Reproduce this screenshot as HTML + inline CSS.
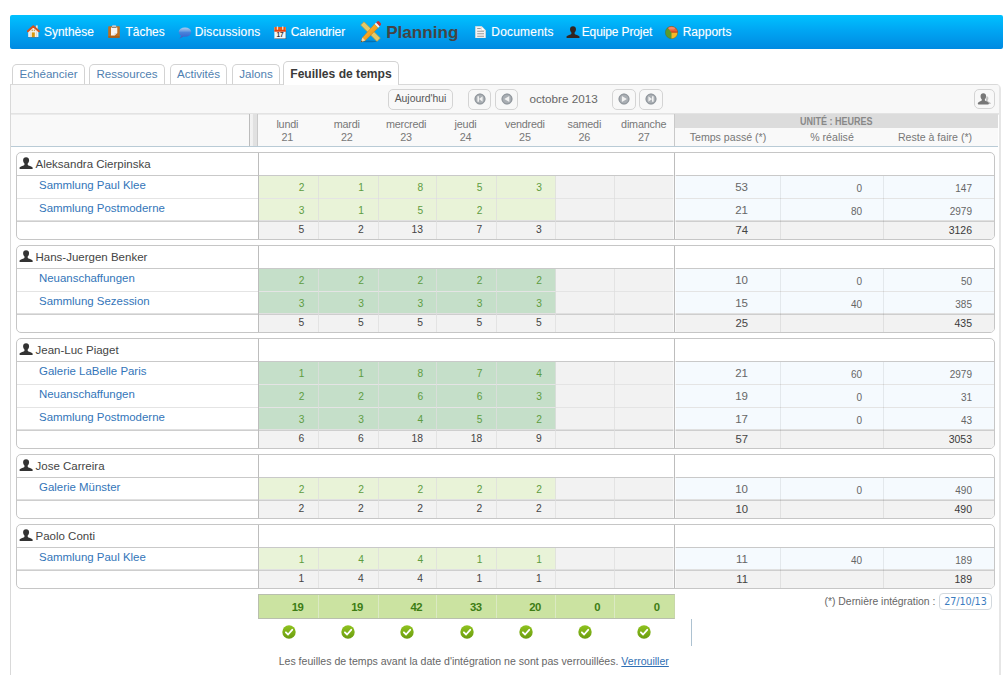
<!DOCTYPE html><html lang="fr"><head><meta charset="utf-8"><title>Planning - Feuilles de temps</title><style>
*{box-sizing:border-box}
html,body{margin:0;padding:0}
body{width:1006px;height:680px;overflow:hidden;background:#fff;position:relative;font-family:"Liberation Sans",sans-serif;font-size:12px;color:#333}
.a{position:absolute}
.t{position:absolute;white-space:nowrap;line-height:1}
#nav{left:10px;top:15px;width:993px;height:34px;border-radius:2px;background:linear-gradient(#00c1ff 0%,#00a6f3 45%,#008ae1 100%)}
#nav .t{color:#fff;font-size:12px;top:11px;text-shadow:0 0 1px rgba(255,255,255,.35)}
#nav .cur{color:#444;font-weight:bold;font-size:17.1px;top:9px;text-shadow:none}
.tab{position:absolute;top:64px;height:20px;border:1px solid #d3d3d3;border-bottom:none;border-radius:5px 5px 0 0;background:#fff;color:#4f7fb0;font-size:11.6px;text-align:center;line-height:18px;white-space:nowrap}
.tab.on{background:#fff;color:#333;font-weight:bold;top:61px;height:24px;line-height:24px;border-color:#d3d3d3;font-size:12.1px;color:#3a3a3a}
#panel{left:10px;top:84px;width:991px;height:591px;border:1px solid #d9d9d9;border-right:2px solid #e6e6e6;border-bottom:none;border-radius:0 5px 0 0;background:#fff}
#tb{left:11px;top:85px;width:988px;border-radius:0 3px 0 0;height:30px;background:#f8f8f8;border-bottom:1px solid #ebebeb;box-shadow:inset 0 -1px 0 #e3e3e3}
#hd{left:11px;top:115px;width:987px;height:32px;background:#f9f9f9;border-bottom:1px solid #b9cbd6}
.btn{position:absolute;top:89px;height:21px;border:1px solid #d4d4d4;border-radius:5px;background:#f8f8f8;color:#555;font-size:10.4px;text-align:center;line-height:18px}
.dh{position:absolute;top:117.6px;width:60px;text-align:center;color:#777;font-size:10.8px;letter-spacing:-.2px;line-height:13.8px;white-space:nowrap}
.rh{position:absolute;top:131px;text-align:center;color:#777;font-size:10.6px;line-height:13px;white-space:nowrap}
.g{position:absolute;border:1px solid #c6c6c6;border-radius:5px;background:#fff;overflow:hidden}
.c{position:absolute}
.n{position:absolute;white-space:nowrap;text-align:right;font-size:10.2px;line-height:1}
.lk{position:absolute;white-space:nowrap;color:#3375b9;font-size:11.45px;line-height:1;left:22px}
.nm{position:absolute;white-space:nowrap;color:#444;font-size:11.5px;line-height:1;left:18.5px}
.uic{position:absolute;left:2.4px}
.vl{position:absolute;width:1px;background:#bdbdbd;top:0;bottom:0}
.hl{position:absolute;height:1px;left:0;right:0}
</style></head><body>
<div id="nav" class="a">
<svg class="a" style="left:17.3px;top:9.5px" width="13" height="13" viewBox="0 0 13 13"><rect x="8.9" y="0.4" width="1.8" height="3.4" fill="#f1e4df"/><path d="M1.2 6.2L6.3 1.8l5.1 4.400V12.300H1.200z" fill="#f3f1ee"/><path d="M3.300 6.500v5.800M9.500 6.500v5.800" stroke="#dcd8d2" stroke-width=".8"/><rect x="4.800" y="7.400" width="3" height="4.900" fill="#d9980f"/><rect x="4.600" y="4.600" width="1.300" height="1.500" fill="#c9a055"/><rect x="6.800" y="4.600" width="1.300" height="1.500" fill="#c9a055"/><path d="M0.800 6.300L6.300 1.200l5.600 5.100" fill="none" stroke="#d6521c" stroke-width="1.900" stroke-linejoin="round" stroke-linecap="round"/><rect x="1" y="12.100" width="10.600" height=".7" fill="#2b5f86" opacity=".7"/></svg>
<span class="t" style="left:33.9px">Synthèse</span>
<svg class="a" style="left:98px;top:10px" width="12" height="13" viewBox="0 0 12 13"><rect x="0.200" y="1.200" width="11.600" height="11.500" rx="0.800" fill="#c0701f"/><rect x="0.200" y="11.300" width="11.600" height="1.400" rx="0.700" fill="#a85c14"/><path d="M3 2.600h6.300v5.300L6.500 10.600H3z" fill="#f6f4f2"/><path d="M9.300 7.900L6.500 10.600V8.300z" fill="#d8d2cc"/><rect x="4" y="0.300" width="4.200" height="2.100" rx="0.900" fill="#c9c9c9"/><rect x="4" y="2.100" width="4.200" height=".8" fill="#777"/></svg>
<span class="t" style="left:115.4px">Tâches</span>
<svg class="a" style="left:167.5px;top:11.5px" width="14" height="12.500" viewBox="0 0 14 12.500"><defs><linearGradient id="bg1" x1="0" y1="0" x2="0" y2="1"><stop offset="0" stop-color="#b0cdee"/><stop offset=".4" stop-color="#6c9fe2"/><stop offset=".5" stop-color="#4a86dc"/><stop offset="1" stop-color="#3a66cf"/></linearGradient></defs><path d="M3.800 8.500L1.300 11.700l4.400-2.200z" fill="#4a5fc0"/><ellipse cx="7" cy="5.100" rx="6.300" ry="4.700" fill="url(#bg1)"/></svg>
<span class="t" style="left:184.7px;letter-spacing:0.15px">Discussions</span>
<svg class="a" style="left:264px;top:10.5px" width="12.500" height="13.500" viewBox="0 0 12.500 13.500"><rect x="0.400" y="1" width="11.400" height="12" rx="0.600" fill="#f6f6f6"/><rect x="0.400" y="12.300" width="11.700" height=".9" fill="#3c4c5c" opacity=".75"/><rect x="11.600" y="5" width=".7" height="8" fill="#3c4c5c" opacity=".6"/><rect x="0.400" y="1" width="11.400" height="4.400" fill="#ee5a12"/><rect x="0.400" y="4.500" width="11.400" height="1" fill="#d62a0a"/><rect x="2.800" y="0.200" width="1.300" height="3.600" rx=".6" fill="#e8e0dc"/><rect x="8.100" y="0.200" width="1.300" height="3.600" rx=".6" fill="#e8e0dc"/><text x="6.100" y="11.300" font-family="Liberation Sans,sans-serif" font-size="6.500" font-weight="bold" fill="#333" text-anchor="middle">17</text></svg>
<span class="t" style="left:280.7px;letter-spacing:-0.1px">Calendrier</span>
<svg class="a" style="left:349.5px;top:6px" width="21" height="21.500" viewBox="0 0 21 21.500"><defs><linearGradient id="pg1" x1="0" y1="0" x2="1" y2="1"><stop offset="0" stop-color="#ffc84a"/><stop offset=".5" stop-color="#f3a322"/><stop offset="1" stop-color="#d9860f"/></linearGradient></defs><path d="M0.700 4.100L4 0.800 20.300 17.100 17 20.400z" fill="#e3c968" stroke="#bf9c3a" stroke-width=".7"/><ellipse cx="9" cy="20.400" rx="8" ry=".8" fill="#0a3a66" opacity=".4"/><path d="M14.600 3.100l3.600 3.600L5.300 19.600l-4.400 1.500 1.600-4.500z" fill="url(#pg1)" stroke="#c47a14" stroke-width=".5"/><path d="M0.900 21.100l1.600-4.500 2.800 3z" fill="#f3d6ab"/><path d="M0.900 21.100l.6-1.600 1 1z" fill="#222"/><path d="M14.600 3.100l1.500-1.500 3.600 3.600-1.500 1.500z" fill="#f2f2f2"/><path d="M16.100 1.600l.9-.9a1.700 1.700 0 0 1 2.400 0l1.200 1.200a1.700 1.700 0 0 1 0 2.400l-.9.900z" fill="#cc3535"/></svg>
<span class="t cur" style="left:376.2px">Planning</span>
<svg class="a" style="left:465px;top:10.800px" width="11" height="12.500" viewBox="0 0 11 12.500"><path d="M0.300 0.300h6.200l4.200 4.200v7.700H0.300z" fill="#f3f3f3" stroke="#d5cfc9" stroke-width=".5"/><path d="M6.500 0.300v4.200h4.200z" fill="#fff" stroke="#c9c3bd" stroke-width=".4"/><path d="M2.200 2.500h3.500M2.200 5.200h6.800M2.200 7.800h6.800M2.200 10.300h6.800" stroke="#9a9a9a" stroke-width="1.100"/><rect x="0.300" y="12" width="10.700" height=".5" fill="#2c5c88" opacity=".5"/></svg>
<span class="t" style="left:481.3px;letter-spacing:0.2px">Documents</span>
<svg class="a" style="left:556.2px;top:11.2px" width="14" height="12.3" viewBox="0 0 14 12.400"><path d="M7 0.200c1.900 0 3 1.300 3 3.100 0 1.300-.6 2.600-1.400 3.300v.9c0 .5.400.8 1.600 1.200 1.900.6 3.200 1.200 3.500 2.400.1.500-.2.900-.7.900H1c-.5 0-.8-.4-.7-.9.300-1.200 1.600-1.800 3.500-2.400 1.200-.4 1.600-.7 1.600-1.200v-.9C4.600 5.900 4 4.600 4 3.300 4 1.500 5.100.2 7 .2z" fill="#33251f"/></svg>
<span class="t" style="left:571.7px;letter-spacing:-0.12px">Equipe Projet</span>
<svg class="a" style="left:655.200px;top:10.500px" width="13" height="13" viewBox="0 0 13 13"><circle cx="6.500" cy="6.500" r="6.200" fill="#5a9a2c"/><path d="M6.500 6.500L2.500 1.800A6.200 6.200 0 0 1 12.700 6.500z" fill="#e8623a"/><path d="M6.500 6.500h6.200A6.200 6.200 0 0 1 6.500 12.700z" fill="#f6b828"/><path d="M6.500 6.500h6.200v-.9H6z" fill="#cf3a18"/><ellipse cx="6.800" cy="2.300" rx="3.300" ry="1.200" fill="#fff" opacity=".25"/><circle cx="6.500" cy="6.500" r="6.200" fill="none" stroke="#5a4a2a" stroke-width=".5" opacity=".6"/></svg>
<span class="t" style="left:672.7px">Rapports</span>
</div>
<div id="panel" class="a"></div>
<div class="tab" style="left:12px;width:73px">Echéancier</div>
<div class="tab" style="left:89px;width:76px">Ressources</div>
<div class="tab" style="left:170px;width:57px">Activités</div>
<div class="tab" style="left:232px;width:48px">Jalons</div>
<div class="tab on" style="left:283px;width:116px">Feuilles de temps</div>
<div id="tb" class="a"></div><div id="hd" class="a"></div>
<div class="btn" style="left:388px;width:65px">Aujourd'hui</div>
<div class="btn" style="left:468px;width:23px"><svg class="a" style="left:4.9px;top:3.2px" width="12" height="12" viewBox="0 0 12 12"><circle cx="6" cy="6" r="5.500" fill="#a9aeb3"/><circle cx="6" cy="6" r="4.900" fill="none" stroke="#8f959b" stroke-width="1"/><path d="M3.4 3.2h1.6v5.600H3.400zM8.600 3.200v5.600L5 6z" fill="#f1f1f1"/></svg></div>
<div class="btn" style="left:495px;width:23px"><svg class="a" style="left:4.9px;top:3.2px" width="12" height="12" viewBox="0 0 12 12"><circle cx="6" cy="6" r="5.500" fill="#a9aeb3"/><circle cx="6" cy="6" r="4.900" fill="none" stroke="#8f959b" stroke-width="1"/><path d="M8.300 3v6L3.300 6z" fill="#f1f1f1"/></svg></div>
<div class="btn" style="left:612px;width:24px"><svg class="a" style="left:5.4px;top:3.2px" width="12" height="12" viewBox="0 0 12 12"><circle cx="6" cy="6" r="5.500" fill="#a9aeb3"/><circle cx="6" cy="6" r="4.900" fill="none" stroke="#8f959b" stroke-width="1"/><path d="M3.900 3v6l5-3z" fill="#f1f1f1"/></svg></div>
<div class="btn" style="left:639px;width:24px"><svg class="a" style="left:5.4px;top:3.2px" width="12" height="12" viewBox="0 0 12 12"><circle cx="6" cy="6" r="5.500" fill="#a9aeb3"/><circle cx="6" cy="6" r="4.900" fill="none" stroke="#8f959b" stroke-width="1"/><path d="M7 3.200h1.600v5.600H7zM3.400 3.200v5.600L7 6z" fill="#f1f1f1"/></svg></div>
<span class="t" style="left:529.5px;top:93px;color:#666;font-size:11.7px">octobre 2013</span>
<div class="btn" style="left:974px;width:21px;height:20px"><svg class="a" style="left:2.3px;top:3.3px" width="14.5" height="12" viewBox="0 0 14 13"><path d="M9.500 3.500c1.300 0 2 1 2 2.200 0 .9-.3 1.700-.8 2.200v.6c0 .4.300.6 1.100.9 1.200.4 2 .9 2.200 1.700v.9h-6z" fill="#c2c2c2"/><path d="M6 0.300c1.900 0 3 1.400 3 3.200 0 1.300-.5 2.600-1.300 3.300v1c0 .5.400.8 1.600 1.200 1.500.5 2.500 1.300 2.700 2.500.1.500-.2.900-.7.900H.700c-.5 0-.8-.4-.7-.9.200-1.200 1.200-2 2.700-2.500 1.200-.4 1.600-.7 1.600-1.200v-1C3.500 6.100 3 4.800 3 3.500 3 1.700 4.100.3 6 .3z" fill="#777"/></svg></div>
<div class="a" style="left:249px;top:114px;width:9px;height:32px;border-left:1px solid #bcbcbc;border-right:1px solid #cacaca;background:linear-gradient(90deg,#f3f3f3 0,#f0f0f0 2.5px,#e1e1e1 3.5px,#e1e1e1 100%)"></div>
<div class="dh" style="left:257.3px">lundi<br>21</div>
<div class="dh" style="left:316.7px">mardi<br>22</div>
<div class="dh" style="left:376.1px">mercredi<br>23</div>
<div class="dh" style="left:435.5px">jeudi<br>24</div>
<div class="dh" style="left:494.9px">vendredi<br>25</div>
<div class="dh" style="left:554.3px">samedi<br>26</div>
<div class="dh" style="left:613.7px">dimanche<br>27</div>
<div class="a" style="left:674px;top:114px;width:1px;height:32px;background:#c9c9c9"></div>
<div class="a" style="left:675px;top:114px;width:323px;height:14px;background:#dcdcdc;color:#888;font-weight:bold;font-size:10px;line-height:15px;text-align:center;white-space:nowrap"><span style="display:inline-block;transform:scaleX(.9)">UNITÉ : HEURES</span></div>
<div class="rh" style="left:668px;width:120px">Temps passé (*)</div>
<div class="rh" style="left:772px;width:120px">% réalisé</div>
<div class="rh" style="left:875px;width:120px">Reste à faire (*)</div>
<div class="g" style="left:16px;top:152px;width:979px;height:88px">
<svg class="uic" style="top:4px" viewBox="0 0 14 12.4" width="14.2" height="12.4"><path d="M7 0.2c1.9 0 3 1.3 3 3.100 0 1.300-.6 2.600-1.400 3.300v.9c0 .5.400.8 1.600 1.200 1.900.6 3.200 1.200 3.500 2.400.1.500-.2.900-.7.900H1c-.5 0-.8-.4-.7-.9.300-1.200 1.600-1.800 3.500-2.400 1.200-.4 1.600-.7 1.600-1.200v-.9C4.600 5.900 4 4.600 4 3.300 4 1.500 5.100.2 7 .2z" fill="#333"/></svg>
<span class="nm" style="top:6px">Aleksandra Cierpinska</span>
<div class="c" style="left:242px;top:23px;width:297px;height:22px;background:#e9f3d8"></div>
<div class="c" style="left:539px;top:23px;width:119px;height:22px;background:#f2f2f2"></div>
<div class="c" style="left:658px;top:23px;width:320px;height:22px;background:#f5fafe"></div>
<div class="hl" style="top:22px;background:#c9c9c9"></div>
<span class="lk" style="top:27.1px">Sammlung Paul Klee</span>
<span class="n" style="right:689.6px;top:30.1px;color:#5d9c3f">2</span>
<span class="n" style="right:630.2px;top:30.1px;color:#5d9c3f">1</span>
<span class="n" style="right:570.9px;top:30.1px;color:#5d9c3f">8</span>
<span class="n" style="right:511.5px;top:30.1px;color:#5d9c3f">5</span>
<span class="n" style="right:452.2px;top:30.1px;color:#5d9c3f">3</span>
<span class="n" style="right:246px;top:29px;color:#666;font-size:11.500px">53</span>
<span class="n" style="right:132px;top:31.3px;color:#666;font-size:10px">0</span>
<span class="n" style="right:22px;top:31.3px;color:#666;font-size:10px">147</span>
<div class="c" style="left:242px;top:46px;width:297px;height:22px;background:#e9f3d8"></div>
<div class="c" style="left:539px;top:46px;width:119px;height:22px;background:#f2f2f2"></div>
<div class="c" style="left:658px;top:46px;width:320px;height:22px;background:#f5fafe"></div>
<div class="hl" style="top:45px;background:#e4e4e4"></div>
<span class="lk" style="top:50.1px">Sammlung Postmoderne</span>
<span class="n" style="right:689.6px;top:53.1px;color:#5d9c3f">3</span>
<span class="n" style="right:630.2px;top:53.1px;color:#5d9c3f">1</span>
<span class="n" style="right:570.9px;top:53.1px;color:#5d9c3f">5</span>
<span class="n" style="right:511.5px;top:53.1px;color:#5d9c3f">2</span>
<span class="n" style="right:246px;top:52px;color:#666;font-size:11.500px">21</span>
<span class="n" style="right:132px;top:54.3px;color:#666;font-size:10px">80</span>
<span class="n" style="right:22px;top:54.3px;color:#666;font-size:10px">2979</span>
<div class="c" style="left:242px;top:69px;width:736px;height:18px;background:#f2f2f2"></div>
<div class="hl" style="top:67px;height:2px;background:linear-gradient(#e0e0e0 0,#e0e0e0 50%,#cecece 50%,#cecece 100%)"></div>
<span class="n" style="right:689.8px;top:71.5px;color:#444;font-size:10.3px">5</span>
<span class="n" style="right:630.4px;top:71.5px;color:#444;font-size:10.3px">2</span>
<span class="n" style="right:571.1px;top:71.5px;color:#444;font-size:10.3px">13</span>
<span class="n" style="right:511.7px;top:71.5px;color:#444;font-size:10.3px">7</span>
<span class="n" style="right:452.4px;top:71.5px;color:#444;font-size:10.3px">3</span>
<span class="n" style="right:246px;top:72px;color:#444;font-size:11.3px">74</span>
<span class="n" style="right:22px;top:72.3px;color:#3a3a3a;font-size:10.5px">3126</span>
<div class="c" style="left:301px;top:23px;width:1px;bottom:0;background:rgba(222,222,222,.75)"></div>
<div class="c" style="left:361px;top:23px;width:1px;bottom:0;background:rgba(222,222,222,.75)"></div>
<div class="c" style="left:419px;top:23px;width:1px;bottom:0;background:rgba(222,222,222,.75)"></div>
<div class="c" style="left:479px;top:23px;width:1px;bottom:0;background:rgba(222,222,222,.75)"></div>
<div class="c" style="left:538px;top:23px;width:1px;bottom:0;background:rgba(222,222,222,.75)"></div>
<div class="c" style="left:597px;top:23px;width:1px;bottom:0;background:rgba(222,222,222,.75)"></div>
<div class="c" style="left:763px;top:23px;width:1px;bottom:0;background:rgba(0,0,0,.07)"></div>
<div class="c" style="left:866px;top:23px;width:1px;bottom:0;background:rgba(0,0,0,.07)"></div>
<div class="vl" style="left:241px"></div><div class="vl" style="left:657px;box-shadow:1px 0 0 rgba(255,255,255,.55),-1px 0 0 rgba(255,255,255,.55)"></div>
</div>
<div class="g" style="left:16px;top:245px;width:979px;height:88px">
<svg class="uic" style="top:4px" viewBox="0 0 14 12.4" width="14.2" height="12.4"><path d="M7 0.2c1.9 0 3 1.3 3 3.100 0 1.300-.6 2.600-1.400 3.300v.9c0 .5.400.8 1.600 1.200 1.900.6 3.200 1.200 3.500 2.400.1.500-.2.900-.7.900H1c-.5 0-.8-.4-.7-.9.300-1.200 1.600-1.800 3.500-2.400 1.200-.4 1.600-.7 1.600-1.200v-.9C4.600 5.900 4 4.600 4 3.300 4 1.500 5.100.2 7 .2z" fill="#333"/></svg>
<span class="nm" style="top:6px">Hans-Juergen Benker</span>
<div class="c" style="left:242px;top:23px;width:297px;height:22px;background:#c5dfc9"></div>
<div class="c" style="left:539px;top:23px;width:119px;height:22px;background:#f2f2f2"></div>
<div class="c" style="left:658px;top:23px;width:320px;height:22px;background:#f5fafe"></div>
<div class="hl" style="top:22px;background:#c9c9c9"></div>
<span class="lk" style="top:27.1px">Neuanschaffungen</span>
<span class="n" style="right:689.6px;top:30.1px;color:#5d9c3f">2</span>
<span class="n" style="right:630.2px;top:30.1px;color:#5d9c3f">2</span>
<span class="n" style="right:570.9px;top:30.1px;color:#5d9c3f">2</span>
<span class="n" style="right:511.5px;top:30.1px;color:#5d9c3f">2</span>
<span class="n" style="right:452.2px;top:30.1px;color:#5d9c3f">2</span>
<span class="n" style="right:246px;top:29px;color:#666;font-size:11.500px">10</span>
<span class="n" style="right:132px;top:31.3px;color:#666;font-size:10px">0</span>
<span class="n" style="right:22px;top:31.3px;color:#666;font-size:10px">50</span>
<div class="c" style="left:242px;top:46px;width:297px;height:22px;background:#c5dfc9"></div>
<div class="c" style="left:539px;top:46px;width:119px;height:22px;background:#f2f2f2"></div>
<div class="c" style="left:658px;top:46px;width:320px;height:22px;background:#f5fafe"></div>
<div class="hl" style="top:45px;background:#e4e4e4"></div>
<span class="lk" style="top:50.1px">Sammlung Sezession</span>
<span class="n" style="right:689.6px;top:53.1px;color:#5d9c3f">3</span>
<span class="n" style="right:630.2px;top:53.1px;color:#5d9c3f">3</span>
<span class="n" style="right:570.9px;top:53.1px;color:#5d9c3f">3</span>
<span class="n" style="right:511.5px;top:53.1px;color:#5d9c3f">3</span>
<span class="n" style="right:452.2px;top:53.1px;color:#5d9c3f">3</span>
<span class="n" style="right:246px;top:52px;color:#666;font-size:11.500px">15</span>
<span class="n" style="right:132px;top:54.3px;color:#666;font-size:10px">40</span>
<span class="n" style="right:22px;top:54.3px;color:#666;font-size:10px">385</span>
<div class="c" style="left:242px;top:69px;width:736px;height:18px;background:#f2f2f2"></div>
<div class="hl" style="top:67px;height:2px;background:linear-gradient(#e0e0e0 0,#e0e0e0 50%,#cecece 50%,#cecece 100%)"></div>
<span class="n" style="right:689.8px;top:71.5px;color:#444;font-size:10.3px">5</span>
<span class="n" style="right:630.4px;top:71.5px;color:#444;font-size:10.3px">5</span>
<span class="n" style="right:571.1px;top:71.5px;color:#444;font-size:10.3px">5</span>
<span class="n" style="right:511.7px;top:71.5px;color:#444;font-size:10.3px">5</span>
<span class="n" style="right:452.4px;top:71.5px;color:#444;font-size:10.3px">5</span>
<span class="n" style="right:246px;top:72px;color:#444;font-size:11.3px">25</span>
<span class="n" style="right:22px;top:72.3px;color:#3a3a3a;font-size:10.5px">435</span>
<div class="c" style="left:301px;top:23px;width:1px;bottom:0;background:rgba(222,222,222,.75)"></div>
<div class="c" style="left:361px;top:23px;width:1px;bottom:0;background:rgba(222,222,222,.75)"></div>
<div class="c" style="left:419px;top:23px;width:1px;bottom:0;background:rgba(222,222,222,.75)"></div>
<div class="c" style="left:479px;top:23px;width:1px;bottom:0;background:rgba(222,222,222,.75)"></div>
<div class="c" style="left:538px;top:23px;width:1px;bottom:0;background:rgba(222,222,222,.75)"></div>
<div class="c" style="left:597px;top:23px;width:1px;bottom:0;background:rgba(222,222,222,.75)"></div>
<div class="c" style="left:763px;top:23px;width:1px;bottom:0;background:rgba(0,0,0,.07)"></div>
<div class="c" style="left:866px;top:23px;width:1px;bottom:0;background:rgba(0,0,0,.07)"></div>
<div class="vl" style="left:241px"></div><div class="vl" style="left:657px;box-shadow:1px 0 0 rgba(255,255,255,.55),-1px 0 0 rgba(255,255,255,.55)"></div>
</div>
<div class="g" style="left:16px;top:338px;width:979px;height:111px">
<svg class="uic" style="top:4px" viewBox="0 0 14 12.4" width="14.2" height="12.4"><path d="M7 0.2c1.9 0 3 1.3 3 3.100 0 1.300-.6 2.600-1.400 3.300v.9c0 .5.400.8 1.600 1.200 1.900.6 3.200 1.200 3.500 2.400.1.500-.2.900-.7.900H1c-.5 0-.8-.4-.7-.9.300-1.200 1.600-1.800 3.500-2.400 1.200-.4 1.600-.7 1.600-1.200v-.9C4.600 5.900 4 4.600 4 3.300 4 1.500 5.100.2 7 .2z" fill="#333"/></svg>
<span class="nm" style="top:6px">Jean-Luc Piaget</span>
<div class="c" style="left:242px;top:23px;width:297px;height:22px;background:#c5dfc9"></div>
<div class="c" style="left:539px;top:23px;width:119px;height:22px;background:#f2f2f2"></div>
<div class="c" style="left:658px;top:23px;width:320px;height:22px;background:#f5fafe"></div>
<div class="hl" style="top:22px;background:#c9c9c9"></div>
<span class="lk" style="top:27.1px">Galerie LaBelle Paris</span>
<span class="n" style="right:689.6px;top:30.1px;color:#5d9c3f">1</span>
<span class="n" style="right:630.2px;top:30.1px;color:#5d9c3f">1</span>
<span class="n" style="right:570.9px;top:30.1px;color:#5d9c3f">8</span>
<span class="n" style="right:511.5px;top:30.1px;color:#5d9c3f">7</span>
<span class="n" style="right:452.2px;top:30.1px;color:#5d9c3f">4</span>
<span class="n" style="right:246px;top:29px;color:#666;font-size:11.500px">21</span>
<span class="n" style="right:132px;top:31.3px;color:#666;font-size:10px">60</span>
<span class="n" style="right:22px;top:31.3px;color:#666;font-size:10px">2979</span>
<div class="c" style="left:242px;top:46px;width:297px;height:22px;background:#c5dfc9"></div>
<div class="c" style="left:539px;top:46px;width:119px;height:22px;background:#f2f2f2"></div>
<div class="c" style="left:658px;top:46px;width:320px;height:22px;background:#f5fafe"></div>
<div class="hl" style="top:45px;background:#e4e4e4"></div>
<span class="lk" style="top:50.1px">Neuanschaffungen</span>
<span class="n" style="right:689.6px;top:53.1px;color:#5d9c3f">2</span>
<span class="n" style="right:630.2px;top:53.1px;color:#5d9c3f">2</span>
<span class="n" style="right:570.9px;top:53.1px;color:#5d9c3f">6</span>
<span class="n" style="right:511.5px;top:53.1px;color:#5d9c3f">6</span>
<span class="n" style="right:452.2px;top:53.1px;color:#5d9c3f">3</span>
<span class="n" style="right:246px;top:52px;color:#666;font-size:11.500px">19</span>
<span class="n" style="right:132px;top:54.3px;color:#666;font-size:10px">0</span>
<span class="n" style="right:22px;top:54.3px;color:#666;font-size:10px">31</span>
<div class="c" style="left:242px;top:69px;width:297px;height:22px;background:#c5dfc9"></div>
<div class="c" style="left:539px;top:69px;width:119px;height:22px;background:#f2f2f2"></div>
<div class="c" style="left:658px;top:69px;width:320px;height:22px;background:#f5fafe"></div>
<div class="hl" style="top:68px;background:#e4e4e4"></div>
<span class="lk" style="top:73.1px">Sammlung Postmoderne</span>
<span class="n" style="right:689.6px;top:76.1px;color:#5d9c3f">3</span>
<span class="n" style="right:630.2px;top:76.1px;color:#5d9c3f">3</span>
<span class="n" style="right:570.9px;top:76.1px;color:#5d9c3f">4</span>
<span class="n" style="right:511.5px;top:76.1px;color:#5d9c3f">5</span>
<span class="n" style="right:452.2px;top:76.1px;color:#5d9c3f">2</span>
<span class="n" style="right:246px;top:75px;color:#666;font-size:11.500px">17</span>
<span class="n" style="right:132px;top:77.3px;color:#666;font-size:10px">0</span>
<span class="n" style="right:22px;top:77.3px;color:#666;font-size:10px">43</span>
<div class="c" style="left:242px;top:92px;width:736px;height:18px;background:#f2f2f2"></div>
<div class="hl" style="top:90px;height:2px;background:linear-gradient(#e0e0e0 0,#e0e0e0 50%,#cecece 50%,#cecece 100%)"></div>
<span class="n" style="right:689.8px;top:94.5px;color:#444;font-size:10.3px">6</span>
<span class="n" style="right:630.4px;top:94.5px;color:#444;font-size:10.3px">6</span>
<span class="n" style="right:571.1px;top:94.5px;color:#444;font-size:10.3px">18</span>
<span class="n" style="right:511.7px;top:94.5px;color:#444;font-size:10.3px">18</span>
<span class="n" style="right:452.4px;top:94.5px;color:#444;font-size:10.3px">9</span>
<span class="n" style="right:246px;top:95px;color:#444;font-size:11.3px">57</span>
<span class="n" style="right:22px;top:95.3px;color:#3a3a3a;font-size:10.5px">3053</span>
<div class="c" style="left:301px;top:23px;width:1px;bottom:0;background:rgba(222,222,222,.75)"></div>
<div class="c" style="left:361px;top:23px;width:1px;bottom:0;background:rgba(222,222,222,.75)"></div>
<div class="c" style="left:419px;top:23px;width:1px;bottom:0;background:rgba(222,222,222,.75)"></div>
<div class="c" style="left:479px;top:23px;width:1px;bottom:0;background:rgba(222,222,222,.75)"></div>
<div class="c" style="left:538px;top:23px;width:1px;bottom:0;background:rgba(222,222,222,.75)"></div>
<div class="c" style="left:597px;top:23px;width:1px;bottom:0;background:rgba(222,222,222,.75)"></div>
<div class="c" style="left:763px;top:23px;width:1px;bottom:0;background:rgba(0,0,0,.07)"></div>
<div class="c" style="left:866px;top:23px;width:1px;bottom:0;background:rgba(0,0,0,.07)"></div>
<div class="vl" style="left:241px"></div><div class="vl" style="left:657px;box-shadow:1px 0 0 rgba(255,255,255,.55),-1px 0 0 rgba(255,255,255,.55)"></div>
</div>
<div class="g" style="left:16px;top:454px;width:979px;height:65px">
<svg class="uic" style="top:4px" viewBox="0 0 14 12.4" width="14.2" height="12.4"><path d="M7 0.2c1.9 0 3 1.3 3 3.100 0 1.300-.6 2.600-1.400 3.300v.9c0 .5.400.8 1.600 1.200 1.900.6 3.200 1.200 3.500 2.400.1.500-.2.900-.7.900H1c-.5 0-.8-.4-.7-.9.300-1.200 1.600-1.800 3.500-2.400 1.200-.4 1.600-.7 1.600-1.200v-.9C4.600 5.900 4 4.600 4 3.300 4 1.500 5.100.2 7 .2z" fill="#333"/></svg>
<span class="nm" style="top:6px">Jose Carreira</span>
<div class="c" style="left:242px;top:23px;width:297px;height:22px;background:#e9f3d8"></div>
<div class="c" style="left:539px;top:23px;width:119px;height:22px;background:#f2f2f2"></div>
<div class="c" style="left:658px;top:23px;width:320px;height:22px;background:#f5fafe"></div>
<div class="hl" style="top:22px;background:#c9c9c9"></div>
<span class="lk" style="top:27.1px">Galerie Münster</span>
<span class="n" style="right:689.6px;top:30.1px;color:#5d9c3f">2</span>
<span class="n" style="right:630.2px;top:30.1px;color:#5d9c3f">2</span>
<span class="n" style="right:570.9px;top:30.1px;color:#5d9c3f">2</span>
<span class="n" style="right:511.5px;top:30.1px;color:#5d9c3f">2</span>
<span class="n" style="right:452.2px;top:30.1px;color:#5d9c3f">2</span>
<span class="n" style="right:246px;top:29px;color:#666;font-size:11.500px">10</span>
<span class="n" style="right:132px;top:31.3px;color:#666;font-size:10px">0</span>
<span class="n" style="right:22px;top:31.3px;color:#666;font-size:10px">490</span>
<div class="c" style="left:242px;top:46px;width:736px;height:18px;background:#f2f2f2"></div>
<div class="hl" style="top:44px;height:2px;background:linear-gradient(#e0e0e0 0,#e0e0e0 50%,#cecece 50%,#cecece 100%)"></div>
<span class="n" style="right:689.8px;top:48.5px;color:#444;font-size:10.3px">2</span>
<span class="n" style="right:630.4px;top:48.5px;color:#444;font-size:10.3px">2</span>
<span class="n" style="right:571.1px;top:48.5px;color:#444;font-size:10.3px">2</span>
<span class="n" style="right:511.7px;top:48.5px;color:#444;font-size:10.3px">2</span>
<span class="n" style="right:452.4px;top:48.5px;color:#444;font-size:10.3px">2</span>
<span class="n" style="right:246px;top:49px;color:#444;font-size:11.3px">10</span>
<span class="n" style="right:22px;top:49.3px;color:#3a3a3a;font-size:10.5px">490</span>
<div class="c" style="left:301px;top:23px;width:1px;bottom:0;background:rgba(222,222,222,.75)"></div>
<div class="c" style="left:361px;top:23px;width:1px;bottom:0;background:rgba(222,222,222,.75)"></div>
<div class="c" style="left:419px;top:23px;width:1px;bottom:0;background:rgba(222,222,222,.75)"></div>
<div class="c" style="left:479px;top:23px;width:1px;bottom:0;background:rgba(222,222,222,.75)"></div>
<div class="c" style="left:538px;top:23px;width:1px;bottom:0;background:rgba(222,222,222,.75)"></div>
<div class="c" style="left:597px;top:23px;width:1px;bottom:0;background:rgba(222,222,222,.75)"></div>
<div class="c" style="left:763px;top:23px;width:1px;bottom:0;background:rgba(0,0,0,.07)"></div>
<div class="c" style="left:866px;top:23px;width:1px;bottom:0;background:rgba(0,0,0,.07)"></div>
<div class="vl" style="left:241px"></div><div class="vl" style="left:657px;box-shadow:1px 0 0 rgba(255,255,255,.55),-1px 0 0 rgba(255,255,255,.55)"></div>
</div>
<div class="g" style="left:16px;top:524px;width:979px;height:65px">
<svg class="uic" style="top:4px" viewBox="0 0 14 12.4" width="14.2" height="12.4"><path d="M7 0.2c1.9 0 3 1.3 3 3.100 0 1.300-.6 2.600-1.400 3.300v.9c0 .5.400.8 1.600 1.200 1.900.6 3.200 1.200 3.500 2.400.1.500-.2.900-.7.900H1c-.5 0-.8-.4-.7-.9.300-1.200 1.600-1.800 3.500-2.400 1.200-.4 1.600-.7 1.600-1.200v-.9C4.600 5.900 4 4.600 4 3.300 4 1.500 5.100.2 7 .2z" fill="#333"/></svg>
<span class="nm" style="top:6px">Paolo Conti</span>
<div class="c" style="left:242px;top:23px;width:297px;height:22px;background:#e9f3d8"></div>
<div class="c" style="left:539px;top:23px;width:119px;height:22px;background:#f2f2f2"></div>
<div class="c" style="left:658px;top:23px;width:320px;height:22px;background:#f5fafe"></div>
<div class="hl" style="top:22px;background:#c9c9c9"></div>
<span class="lk" style="top:27.1px">Sammlung Paul Klee</span>
<span class="n" style="right:689.6px;top:30.1px;color:#5d9c3f">1</span>
<span class="n" style="right:630.2px;top:30.1px;color:#5d9c3f">4</span>
<span class="n" style="right:570.9px;top:30.1px;color:#5d9c3f">4</span>
<span class="n" style="right:511.5px;top:30.1px;color:#5d9c3f">1</span>
<span class="n" style="right:452.2px;top:30.1px;color:#5d9c3f">1</span>
<span class="n" style="right:246px;top:29px;color:#666;font-size:11.500px">11</span>
<span class="n" style="right:132px;top:31.3px;color:#666;font-size:10px">40</span>
<span class="n" style="right:22px;top:31.3px;color:#666;font-size:10px">189</span>
<div class="c" style="left:242px;top:46px;width:736px;height:18px;background:#f2f2f2"></div>
<div class="hl" style="top:44px;height:2px;background:linear-gradient(#e0e0e0 0,#e0e0e0 50%,#cecece 50%,#cecece 100%)"></div>
<span class="n" style="right:689.8px;top:48.5px;color:#444;font-size:10.3px">1</span>
<span class="n" style="right:630.4px;top:48.5px;color:#444;font-size:10.3px">4</span>
<span class="n" style="right:571.1px;top:48.5px;color:#444;font-size:10.3px">4</span>
<span class="n" style="right:511.7px;top:48.5px;color:#444;font-size:10.3px">1</span>
<span class="n" style="right:452.4px;top:48.5px;color:#444;font-size:10.3px">1</span>
<span class="n" style="right:246px;top:49px;color:#444;font-size:11.3px">11</span>
<span class="n" style="right:22px;top:49.3px;color:#3a3a3a;font-size:10.5px">189</span>
<div class="c" style="left:301px;top:23px;width:1px;bottom:0;background:rgba(222,222,222,.75)"></div>
<div class="c" style="left:361px;top:23px;width:1px;bottom:0;background:rgba(222,222,222,.75)"></div>
<div class="c" style="left:419px;top:23px;width:1px;bottom:0;background:rgba(222,222,222,.75)"></div>
<div class="c" style="left:479px;top:23px;width:1px;bottom:0;background:rgba(222,222,222,.75)"></div>
<div class="c" style="left:538px;top:23px;width:1px;bottom:0;background:rgba(222,222,222,.75)"></div>
<div class="c" style="left:597px;top:23px;width:1px;bottom:0;background:rgba(222,222,222,.75)"></div>
<div class="c" style="left:763px;top:23px;width:1px;bottom:0;background:rgba(0,0,0,.07)"></div>
<div class="c" style="left:866px;top:23px;width:1px;bottom:0;background:rgba(0,0,0,.07)"></div>
<div class="vl" style="left:241px"></div><div class="vl" style="left:657px;box-shadow:1px 0 0 rgba(255,255,255,.55),-1px 0 0 rgba(255,255,255,.55)"></div>
</div>
<div class="a" style="left:258px;top:594px;width:417px;height:25px;background:#cbe3a1;border:1px solid #b9bfae;border-right-color:#c8d8a8"></div>
<span class="t" style="right:702.6px;top:602px;font-weight:bold;font-size:11.3px;letter-spacing:-.5px;color:#3d7d14;text-align:right">19</span>
<svg class="a" style="left:281.8px;top:624.9px" width="14" height="14" viewBox="0 0 14 14"><circle cx="7" cy="7" r="6.700" fill="url(#ckg)"/><path d="M3.900 7.300l2.200 2.200 4.100-4.700" fill="none" stroke="#fff" stroke-width="1.800" stroke-linecap="round" stroke-linejoin="round"/></svg>
<div class="a" style="left:318px;top:595px;width:1px;height:23px;background:#dbe9c3"></div>
<span class="t" style="right:643.2px;top:602px;font-weight:bold;font-size:11.3px;letter-spacing:-.5px;color:#3d7d14;text-align:right">19</span>
<svg class="a" style="left:341.1px;top:624.9px" width="14" height="14" viewBox="0 0 14 14"><circle cx="7" cy="7" r="6.700" fill="url(#ckg)"/><path d="M3.900 7.300l2.200 2.200 4.100-4.700" fill="none" stroke="#fff" stroke-width="1.800" stroke-linecap="round" stroke-linejoin="round"/></svg>
<div class="a" style="left:378px;top:595px;width:1px;height:23px;background:#dbe9c3"></div>
<span class="t" style="right:583.9px;top:602px;font-weight:bold;font-size:11.3px;letter-spacing:-.5px;color:#3d7d14;text-align:right">42</span>
<svg class="a" style="left:400.3px;top:624.9px" width="14" height="14" viewBox="0 0 14 14"><circle cx="7" cy="7" r="6.700" fill="url(#ckg)"/><path d="M3.900 7.300l2.200 2.200 4.100-4.700" fill="none" stroke="#fff" stroke-width="1.800" stroke-linecap="round" stroke-linejoin="round"/></svg>
<div class="a" style="left:436px;top:595px;width:1px;height:23px;background:#dbe9c3"></div>
<span class="t" style="right:524.5px;top:602px;font-weight:bold;font-size:11.3px;letter-spacing:-.5px;color:#3d7d14;text-align:right">33</span>
<svg class="a" style="left:459.6px;top:624.9px" width="14" height="14" viewBox="0 0 14 14"><circle cx="7" cy="7" r="6.700" fill="url(#ckg)"/><path d="M3.900 7.300l2.200 2.200 4.100-4.700" fill="none" stroke="#fff" stroke-width="1.800" stroke-linecap="round" stroke-linejoin="round"/></svg>
<div class="a" style="left:496px;top:595px;width:1px;height:23px;background:#dbe9c3"></div>
<span class="t" style="right:465.2px;top:602px;font-weight:bold;font-size:11.3px;letter-spacing:-.5px;color:#3d7d14;text-align:right">20</span>
<svg class="a" style="left:518.8px;top:624.9px" width="14" height="14" viewBox="0 0 14 14"><circle cx="7" cy="7" r="6.700" fill="url(#ckg)"/><path d="M3.900 7.300l2.200 2.200 4.100-4.700" fill="none" stroke="#fff" stroke-width="1.800" stroke-linecap="round" stroke-linejoin="round"/></svg>
<div class="a" style="left:555px;top:595px;width:1px;height:23px;background:#dbe9c3"></div>
<span class="t" style="right:405.9px;top:602px;font-weight:bold;font-size:11.3px;letter-spacing:-.5px;color:#3d7d14;text-align:right">0</span>
<svg class="a" style="left:578.0px;top:624.9px" width="14" height="14" viewBox="0 0 14 14"><circle cx="7" cy="7" r="6.700" fill="url(#ckg)"/><path d="M3.900 7.300l2.200 2.200 4.100-4.700" fill="none" stroke="#fff" stroke-width="1.800" stroke-linecap="round" stroke-linejoin="round"/></svg>
<div class="a" style="left:614px;top:595px;width:1px;height:23px;background:#dbe9c3"></div>
<span class="t" style="right:346.5px;top:602px;font-weight:bold;font-size:11.3px;letter-spacing:-.5px;color:#3d7d14;text-align:right">0</span>
<svg class="a" style="left:637.3px;top:624.9px" width="14" height="14" viewBox="0 0 14 14"><circle cx="7" cy="7" r="6.700" fill="url(#ckg)"/><path d="M3.900 7.300l2.200 2.200 4.100-4.700" fill="none" stroke="#fff" stroke-width="1.800" stroke-linecap="round" stroke-linejoin="round"/></svg>
<svg width="0" height="0" style="position:absolute"><defs><linearGradient id="ckg" x1="0" y1="0" x2="0" y2="1"><stop offset="0" stop-color="#8fc31f"/><stop offset="1" stop-color="#6b9c10"/></linearGradient></defs></svg>
<div class="a" style="left:691px;top:619px;width:1px;height:27px;background:#adc2d1"></div>
<span class="t" style="left:824.5px;top:596.5px;color:#666;font-size:10.4px">(*) Dernière intégration :</span>
<div class="a" style="left:939px;top:593px;width:53px;height:17px;border:1px solid #d3d9de;border-radius:4px;background:#fff;color:#3a7cc0;font-family:'DejaVu Sans','Liberation Sans',sans-serif;font-size:9.6px;line-height:15.5px;text-align:center;white-space:nowrap;letter-spacing:-.1px">27/10/13</div>
<span class="t" style="left:278.7px;top:656px;color:#666;font-size:10.55px">Les feuilles de temps avant la date d'intégration ne sont pas verrouillées. <span style="color:#2f6fb3;text-decoration:underline">Verrouiller</span></span>
</body></html>
